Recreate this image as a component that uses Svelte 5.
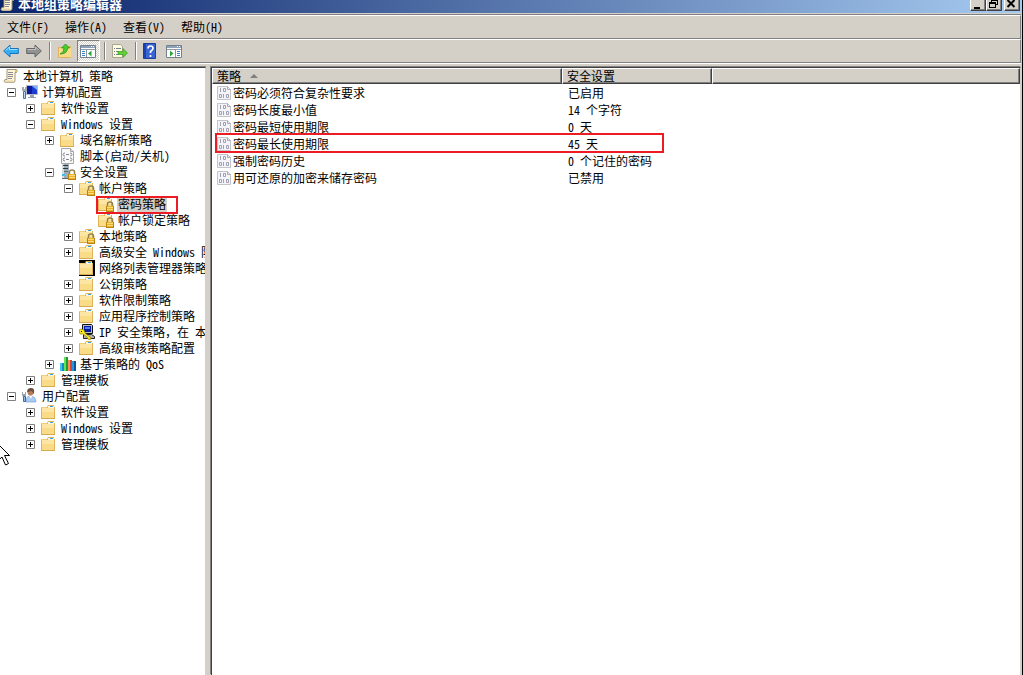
<script>
  const menus = ['文件(F)', '操作(A)', '查看(V)', '帮助(H)'];

  const tree = {
    label: '本地计算机 策略',
    icon: 'scroll',
    children: [
      {
        label: '计算机配置',
        icon: 'computer',
        open: true,
        children: [
          { label: '软件设置', icon: 'folder', open: false },
          {
            label: 'Windows 设置',
            icon: 'folder',
            open: true,
            children: [
              { label: '域名解析策略', icon: 'folder', open: false },
              { label: '脚本(启动/关机)', icon: 'script' },
              {
                label: '安全设置',
                icon: 'server',
                open: true,
                children: [
                  {
                    label: '帐户策略',
                    icon: 'locked',
                    open: true,
                    children: [
                      { label: '密码策略', icon: 'locked', selected: true },
                      { label: '帐户锁定策略', icon: 'locked' }
                    ]
                  },
                  { label: '本地策略', icon: 'locked', open: false },
                  { label: '高级安全 Windows 防火墙', icon: 'folder', open: false },
                  { label: '网络列表管理器策略', icon: 'blackfolder' },
                  { label: '公钥策略', icon: 'folder', open: false },
                  { label: '软件限制策略', icon: 'folder', open: false },
                  { label: '应用程序控制策略', icon: 'folder', open: false },
                  { label: 'IP 安全策略，在 本地计算机', icon: 'ipsec', open: false },
                  { label: '高级审核策略配置', icon: 'folder', open: false }
                ]
              },
              { label: '基于策略的 QoS', icon: 'chart', open: false }
            ]
          },
          { label: '管理模板', icon: 'folder', open: false }
        ]
      },
      {
        label: '用户配置',
        icon: 'user',
        open: true,
        children: [
          { label: '软件设置', icon: 'folder', open: false },
          { label: 'Windows 设置', icon: 'folder', open: false },
          { label: '管理模板', icon: 'folder', open: false }
        ]
      }
    ]
  };

  const policies = [
    { name: '密码必须符合复杂性要求', value: '已启用' },
    { name: '密码长度最小值', value: '14 个字符' },
    { name: '密码最短使用期限', value: '0 天' },
    { name: '密码最长使用期限', value: '45 天', marked: true },
    { name: '强制密码历史', value: '0 个记住的密码' },
    { name: '用可还原的加密来储存密码', value: '已禁用' }
  ];

  // the half-width feature also narrows the full-width comma, so it is kept apart
  const splitComma = (text) => text.split(/(，)/);
</script>

{#snippet folderShape()}
  <path d="M0 3h6l1-2h6v2h1v12H0z" fill="#dfb45a" />
  <path d="M1 4h12v10H1z" fill="#fadb88" />
  <path d="M1 4h12v4H1z" fill="#fde6a4" />
  <path d="M0 3h6v1H0z" fill="#f0cd7c" />
  <path d="M7 2h6v2H7z" fill="#fff6d6" />
  <path d="M9 2h3v1H9z" fill="#3d9be4" />
  <path d="M0 14h14v1H0z" fill="#d8aa50" />
{/snippet}

{#snippet padlock()}
  <path d="M9.500 11V8q0-2 2.500-2t2.500 2v3" fill="none" stroke="#94834e" stroke-width="1.500" />
  <path d="M8 10h8v6H8z" fill="#b9820f" />
  <path d="M9 10h6v5H9z" fill="#e9b22c" />
  <path d="M9 11.500h6M9 13.500h6" stroke="#fbdc78" />
{/snippet}

{#snippet icon(name)}
  <svg class="icon" viewBox="0 0 16 16" aria-hidden="true">
    {#if name === 'folder'}
      {@render folderShape()}
    {:else if name === 'blackfolder'}
      <path d="M0 0h16v16H0z" />
      {@render folderShape()}
    {:else if name === 'locked'}
      {@render folderShape()}
      {@render padlock()}
    {:else if name === 'scroll'}
      <path d="M4 1.500h9.500q1.500 1 0 3H12v8q0 2-2 2H2q-2-1 0-3h2z" fill="#fff6d8" stroke="#a2967c" />
      <path d="M2 12.500h8v2H2z" fill="#e7d6a4" />
      <path d="M12 2h2v2h-2z" fill="#d6c28b" />
      <path d="M5 4.500h5M5 6.500h5M5 8.500h5M5 10.500h4" stroke="#8b8a94" />
    {:else if name === 'computer'}
      <path d="M4.500 1.500h11v9h-11z" fill="#1b3bd2" stroke="#b9bdc6" />
      <path d="M5 2h5v8H5z" fill="#0d1c9e" />
      <path d="M10 2h5v4z" fill="#83aef8" />
      <path d="M8 11h4v2H8zM6 13h8v1H6z" fill="#9aa0aa" />
      <path d="M0 3h5v4H0z" fill="#a4aab0" />
      <path d="M2.500 2v3" stroke="#fff" />
      <path d="M1.500 7.500h2v7h-2z" fill="#b5dcf5" stroke="#4279a4" />
    {:else if name === 'script'}
      <path d="M1.500.5h9l3 3v12h-12z" fill="#fafafa" stroke="#a6a6a6" />
      <path d="M10.500.5v3h3" fill="#ddd" stroke="#a6a6a6" />
      <path d="M5 5q-2 0-2 1.500Q3 8 5 8M10 5q2 0 2 1.500Q12 8 10 8M5 10q-2 0-2 1.500Q3 13 5 13M10 10q2 0 2 1.500q0 1.500-2 1.500M6 6.500h3M6 11.500h3" fill="none" stroke="#85858f" />
    {:else if name === 'server'}
      <path d="M2 0h7v15H2z" fill="#9eacb7" />
      <path d="M2 0h2v15H2z" fill="#d4dde3" />
      <path d="M3 1h5v1H3zM3 4h5v1H3z" fill="#29373f" />
      <path d="M4 7.500h4" stroke="#5c6b76" />
      <path d="M2 10h3v2H2z" fill="#43bde7" />
      <path d="M2 14.500h7" stroke="#566978" />
      {@render padlock()}
    {:else if name === 'ipsec'}
      <path d="M3.500.5h9l1 1v8h-10z" fill="#c2c2c2" stroke="#111" />
      <path d="M5 2h7v6H5z" fill="#081a99" />
      <path d="M6 3h5v2H6z" fill="#4d80ff" />
      <path d="M4.500 10.500h8l3 2v2h-11z" fill="#b4b4b4" stroke="#222" />
      <path d="M0 6l2-1 3 1 1 3 6 5-1 2-2-1-1-2-4-3-3 0z" fill="#fbea20" stroke="#8e7c00" stroke-width=".7" />
      <path d="M2 7h1v1H2z" />
    {:else if name === 'chart'}
      <path d="M0 7h4v8H0z" fill="#138bc4" /><path d="M0 7h2v8H0z" fill="#44c1ee" />
      <path d="M4 1h4v14H4z" fill="#1b9b30" /><path d="M4 1h2v14H4z" fill="#68df58" />
      <path d="M8 4h4v11H8z" fill="#d5442d" /><path d="M8 4h2v11H8z" fill="#fa8c62" />
      <path d="M12 5h4v10h-4z" fill="#07569a" /><path d="M12 5h2v10h-2z" fill="#2794df" />
    {:else if name === 'user'}
      <path d="M4 14q0-6 4-6 6 0 6 6z" fill="#a9cbf3" stroke="#7ba1d0" stroke-width=".7" />
      <path d="M7 8l2 3 1-3z" fill="#fff" />
      <circle cx="8.500" cy="4.500" r="3" fill="#b67d59" />
      <path d="M5 4q0-4 4-4 4 0 3 5l-1 1q0-3-2-3-2 1-4 1z" fill="#6b5140" />
      <path d="M0 4h1v2h2V4h1v3L3 9H1L0 7z" fill="#9ba0a6" />
      <path d="M1.500 8.500h2v5h-2z" fill="#8ebbe6" stroke="#3b6b9f" />
    {:else if name === 'binary'}
      <path d="M.5 1.500h10l3 3v10H.5z" fill="#f4f4f8" stroke="#c3c3ca" />
      <path d="M10.500 1.500v3h3" fill="none" stroke="#a9a9b5" />
      <path d="M3.500 3v4M6.500 3.500h2v3h-2zM2.500 9.500h2v3h-2zM6.500 9v4M9.500 9.500h2v3h-2z" fill="none" stroke="#a1a1b6" />
    {:else if name === 'back'}
      <path d="M.7 8L7 2v3.500h8.300v5H7V14z" fill="#35aef3" stroke="#1674bd" />
      <path d="M2.500 7.500L6.500 4v2.500h8" fill="none" stroke="#9ce0ff" />
    {:else if name === 'forward'}
      <path d="M15.300 8L9 2v3.500H.7v5H9V14z" fill="#929292" stroke="#646464" />
      <path d="M1.500 6.500h8V4l3 3" fill="none" stroke="#c2c2c2" />
    {:else if name === 'up'}
      <path d="M1 4h6l1-1h6v12H1z" fill="#dfb45a" />
      <path d="M2 5h12v9H2z" fill="#fadb88" />
      <path d="M3 11q4-1 4-6H4.500l4-4 4 4h-2q0 6-7.500 6z" fill="#4ccb30" stroke="#228a17" stroke-width=".7" />
    {:else if name === 'treepane' || name === 'actionpane'}
      <path d="M.5 2.500h15v12H.5z" fill="#fff" stroke="#74808d" />
      <path d="M1 3h14v2H1z" fill="#8da2b7" />
      <path d="M1 6.500h14" stroke="#909ba6" />
      <path d="M11 3.500h1M13 3.500h1" stroke="#fff" />
      {#if name === 'treepane'}
        <path d="M6.500 7v7" stroke="#8995a0" />
        <path d="M2 8.500h3M2 10.500h3M2 12.500h3" stroke="#3a82c5" />
        <path d="M11.500 7.500v6l-3.500-3z" fill="#2da537" />
      {:else}
        <path d="M9.500 7v7" stroke="#8995a0" />
        <path d="M11 8.500h3M11 10.500h3M11 12.500h3" stroke="#3a82c5" />
        <path d="M4 7.500v6l3.500-3z" fill="#2da537" />
      {/if}
    {:else if name === 'export'}
      <path d="M.5 1.500h8l2 2v11H.5z" fill="#fffbe3" stroke="#aaa58e" />
      <path d="M2 5.500h1M2 8.500h1M2 11.500h1M4 5.500h5M4 8.500h3M4 11.500h3" stroke="#77808a" />
      <path d="M6 8.500h5V5.500l4.500 4.500-4.500 4.500v-3H6z" fill="#62cf36" stroke="#3a9e20" stroke-width=".7" />
    {:else if name === 'help'}
      <path d="M.5.5h12v15H.5z" fill="#3765d3" stroke="#1d3d9a" />
      <path d="M1 1h2v14H1z" fill="#1f43ac" />
      <path d="M5 5.500Q5 3 7.500 3T10 5.300Q10 7 7.500 8.500V10M7.500 12v2" fill="none" stroke="#fff" stroke-width="1.700" />
    {/if}
  </svg>
{/snippet}

{#snippet branch(node)}
  <li>
    <div class="node" class:selected={node.selected}>
      {#if node !== tree}
        <span class="slot">
          {#if node.open !== undefined}
            <button class="expander" aria-label={node.label} aria-expanded={node.open}>
              <svg viewBox="0 0 9 9" aria-hidden="true">
                <path d="M.5.5h8v8h-8z" fill="#fff" stroke="#808080" />
                <path d={node.open ? 'M2 4.500h5' : 'M2 4.500h5M4.500 2v5'} stroke="#000" />
              </svg>
            </button>
          {/if}
        </span>
      {/if}
      {@render icon(node.icon)}
      <span class="label">{#each splitComma(node.label) as part}<span class:wide={part === '，'}>{part}</span>{/each}</span>
    </div>
    {#if node.children}
      <ul class:nested={node !== tree}>
        {#each node.children as child}
          {@render branch(child)}
        {/each}
      </ul>
    {/if}
  </li>
{/snippet}

<div class="window">
  <header class="titlebar">
    {@render icon('scroll')}
    <h1>本地组策略编辑器</h1>
    <div class="controls">
      <button aria-label="最小化">
        <svg viewBox="0 0 12 12"><path d="M3 9h6v2H3z" /></svg>
      </button>
      <button aria-label="还原">
        <svg viewBox="0 0 12 12">
          <path d="M4 1h7v2H4zM4 1h1v4H4zM10 1h1v6h-1zM8 6h3v1H8zM2 4h7v2H2zM2 4h1v6H2zM8 4h1v6H8zM2 9h7v1H2z" />
        </svg>
      </button>
      <button class="close" aria-label="关闭">
        <svg viewBox="0 0 12 12"><path d="M2.500 2l7 7M9.500 2l-7 7" stroke="#000" stroke-width="2" /></svg>
      </button>
    </div>
  </header>

  <nav class="bar menubar">
    {#each menus as menu}
      <button>{menu}</button>
    {/each}
  </nav>

  <div class="bar toolbar">
    <button aria-label="后退">{@render icon('back')}</button>
    <button aria-label="前进">{@render icon('forward')}</button>
    <span class="separator"></span>
    <button aria-label="上一级">{@render icon('up')}</button>
    <button class="pressed" aria-label="显示/隐藏控制台树">{@render icon('treepane')}</button>
    <span class="separator"></span>
    <button aria-label="导出列表">{@render icon('export')}</button>
    <span class="separator"></span>
    <button aria-label="帮助">{@render icon('help')}</button>
    <button aria-label="显示/隐藏操作窗格">{@render icon('actionpane')}</button>
  </div>

  <main>
    <aside>
      <ul>
        {@render branch(tree)}
      </ul>
    </aside>

    <section>
      <table>
        <thead>
          <tr>
            <th class="name">策略 <svg class="sort" viewBox="0 0 8 4" aria-hidden="true"><path d="M0 4l4-4 4 4z" fill="#808080" /></svg></th>
            <th class="value">安全设置</th>
            <th></th>
          </tr>
        </thead>
        <tbody>
          {#each policies as policy}
            <tr class:marked={policy.marked}>
              <td>
                <div class="policy">
                  {@render icon('binary')}
                  <span>{policy.name}</span>
                </div>
              </td>
              <td>{policy.value}</td>
              <td></td>
            </tr>
          {/each}
        </tbody>
      </table>
    </section>
  </main>

  <svg class="cursor" viewBox="0 0 10 20" aria-hidden="true">
    <path d="M-2.500-2.500L9.500 9.500h-5l4 8-3 1.500-3.500-8-4.500 4z" fill="#fff" stroke="#000" />
  </svg>
</div>

<style>
  :global(body) {
    margin: 0;
    background: #d4d0c8;
  }

  .window {
    position: relative;
    display: flex;
    flex-direction: column;
    box-sizing: border-box;
    min-height: 100vh;
    border-right: 1px solid #000;
    background: #d4d0c8;
    color: #000;
    font-family: 'Noto Sans CJK SC', sans-serif;
    font-size: 12px;
    font-feature-settings: 'hwid';
    line-height: 16px;
    overflow: hidden;
  }

  button {
    padding: 0;
    border: 0;
    background: none;
    color: inherit;
    font: inherit;
    font-feature-settings: inherit;
  }

  svg {
    display: block;
  }

  .icon {
    flex: none;
    width: 16px;
    height: 16px;
  }

  ul {
    margin: 0;
    padding: 0;
    list-style: none;
  }

  .titlebar {
    display: flex;
    align-items: flex-end;
    gap: 2px;
    height: 13px;
    margin-bottom: 2px;
    padding-right: 2px;
    background: linear-gradient(to right, #0a246a, #a6caf0);
    overflow: hidden;
  }

  .titlebar .icon {
    margin-bottom: 1px;
  }

  h1 {
    margin: 0;
    color: #fff;
    font-size: 13px;
    line-height: 18px;
  }

  .controls {
    display: flex;
    margin-left: auto;
    padding-bottom: 2px;
  }

  .controls button {
    box-sizing: border-box;
    width: 16px;
    height: 14px;
    border: 1px solid;
    border-color: #fff #404040 #404040 #fff;
    background: #d4d0c8;
    box-shadow: inset -1px -1px #808080;
  }

  .controls svg {
    width: 12px;
    height: 12px;
  }

  .controls .close {
    margin-left: 2px;
  }

  .bar {
    display: flex;
    align-items: center;
    box-sizing: border-box;
    border: 1px solid #808080;
    border-left: 0;
    border-top-color: #fff;
    margin-right: 1px;
  }

  .menubar {
    gap: 16px;
    height: 24px;
    padding-left: 7px;
    box-shadow: 0 -1px #808080;
  }

  .toolbar {
    height: 24px;
    padding-left: 3px;
    margin-bottom: 4px;
    box-shadow: 0 1px #fff;
  }

  .toolbar button + button {
    margin-left: 7px;
  }

  .toolbar .pressed {
    box-sizing: border-box;
    width: 23px;
    height: 22px;
    padding: 2px;
    border: 1px solid;
    border-color: #808080 #fff #fff #808080;
    background: repeating-conic-gradient(#fff 0 25%, #d4d0c8 0 50%) 0 0 / 2px 2px;
  }

  .toolbar button + .pressed {
    margin-left: 4px;
  }

  .separator {
    width: 1px;
    height: 18px;
    margin: 0 6px 0 7px;
    border-right: 1px solid #fff;
    background: #808080;
  }

  .pressed + .separator {
    margin-left: 4px;
  }

  main {
    display: flex;
    flex: 1;
    gap: 4px;
    margin-right: 1px;
  }

  aside,
  section {
    box-sizing: border-box;
    border-top: 1px solid #404040;
    background: #fff;
    box-shadow: 0 -1px #808080;
  }

  aside {
    flex: none;
    width: 206px;
    border-right: 1px solid #d4d0c8;
    overflow: hidden;
  }

  section {
    flex: 1;
    min-width: 0;
    border-left: 1px solid #404040;
    border-right: 1px solid #d4d0c8;
    box-shadow: -1px -1px #808080;
    margin-left: 1px;
  }

  .nested {
    padding-left: 19px;
  }

  .node {
    position: relative;
    display: flex;
    height: 16px;
    padding-left: 3px;
    white-space: nowrap;
  }

  .slot {
    flex: none;
    box-sizing: border-box;
    width: 19px;
    padding: 4px 0 0 4px;
  }

  .expander {
    display: block;
    width: 9px;
    height: 9px;
  }

  .label {
    margin-left: 3px;
    padding: 0 1px;
  }

  .wide {
    font-feature-settings: normal;
  }

  .selected .label {
    background: #d4d0c8;
  }

  .selected::after {
    content: '';
    position: absolute;
    box-sizing: border-box;
    top: 0;
    left: 20px;
    width: 82px;
    height: 18px;
    border: 2px solid #ed1c24;
    z-index: 1;
  }

  table {
    width: 100%;
    border-collapse: separate;
    border-spacing: 0;
    table-layout: fixed;
  }

  th {
    box-sizing: border-box;
    height: 16px;
    padding: 0 0 0 4px;
    border: 1px solid;
    border-color: #fff #404040 #404040 #fff;
    background: #d4d0c8;
    box-shadow: inset -1px -1px #808080;
    font-weight: normal;
    line-height: 14px;
    text-align: left;
  }

  .name {
    width: 350px;
  }

  .value {
    width: 150px;
  }

  .sort {
    display: inline-block;
    width: 8px;
    height: 4px;
    margin-left: 3px;
    vertical-align: 3px;
  }

  td {
    height: 17px;
    padding: 0 0 0 6px;
    line-height: 17px;
  }

  .policy {
    display: flex;
    align-items: center;
    margin-left: -1px;
  }

  .marked td:first-child {
    position: relative;
  }

  .marked td:first-child::after {
    content: '';
    position: absolute;
    box-sizing: border-box;
    top: -2px;
    left: 3px;
    width: 449px;
    height: 20px;
    border: 2px solid #ed1c24;
  }

  .cursor {
    position: absolute;
    top: 446px;
    left: 0;
    width: 10px;
    height: 20px;
  }
</style>
